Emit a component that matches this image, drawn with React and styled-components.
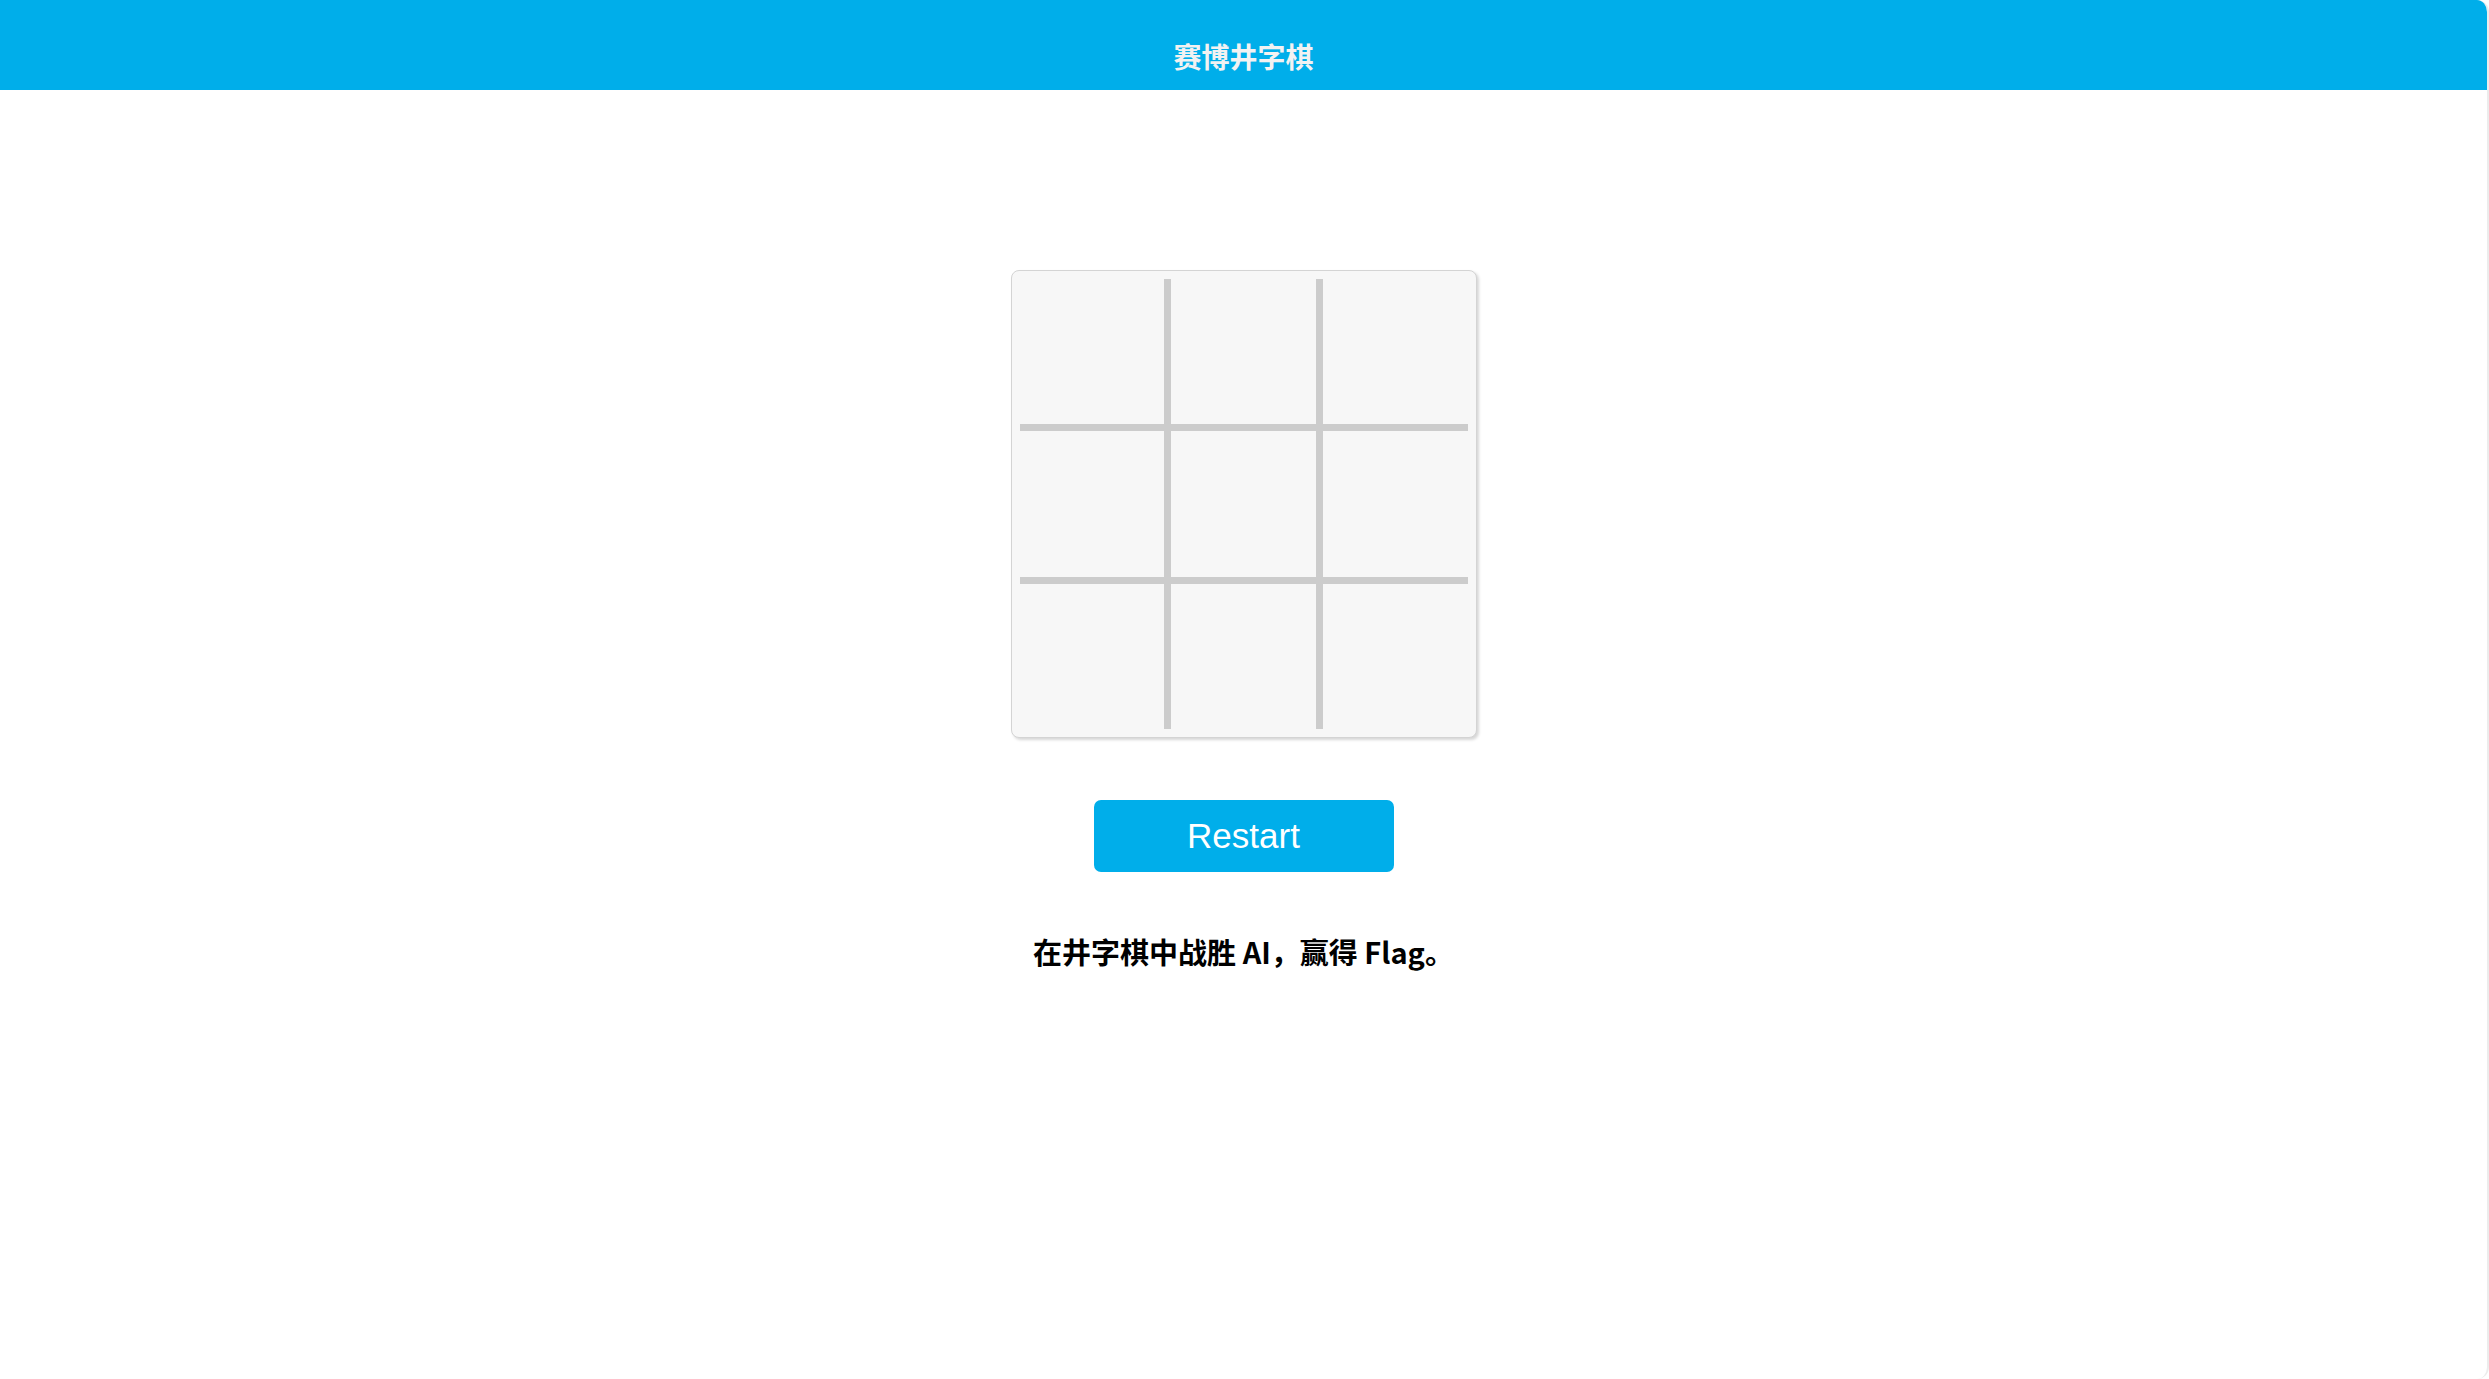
import React, {useState} from "react";
import styled, {createGlobalStyle} from 'styled-components';

const GlobalStyle = createGlobalStyle`
    html, body {
        margin: 0;
        padding: 0;
        background: #ffffff;
    }
    body {
        font-family: "Noto Sans CJK SC", "Noto Sans", sans-serif;
    }
`

const Frame = styled.div`
    min-height: 100vh;
    display: flex;
    flex-direction: column;
    border-right: 2px solid #ececec;
    border-radius: 0 12px 12px 12px;
    overflow: hidden;
    box-sizing: border-box;
`

const Header = styled.header`
    height: 90px;
    box-sizing: border-box;
    padding-top: 39px;
    background: #00aeea;
    text-align: center;
`

const Title = styled.h1`
    margin: 0;
    font-size: 28px;
    line-height: 34px;
    font-weight: 700;
    color: #f2f2f2;
`

const Main = styled.main`
    display: flex;
    flex-direction: column;
    align-items: center;
    padding-top: 180px;
`

const BoardFrame = styled.div`
    padding: 8px;
    background: #f7f7f7;
    border: 1px solid #d4d4d4;
    border-radius: 8px;
    box-shadow: 2px 2px 3px rgba(0, 0, 0, 0.16);
`

const Grid = styled.div`
    display: grid;
    grid-template-columns: 144px 145px 145px;
    grid-template-rows: 145px 146px 145px;
    gap: 7px;
    background: #cccccc;
`

const Cell = styled.div`
    background: #f7f7f7;
    display: flex;
    align-items: center;
    justify-content: center;
    font-family: "Liberation Sans", sans-serif;
    font-size: 90px;
    font-weight: 700;
    color: ${props => props.mark === 'X' ? '#00aeea' : '#ff6b6b'};
    cursor: pointer;
`

const RestartButton = styled.button`
    margin-top: 62px;
    width: 300px;
    height: 72px;
    border: none;
    border-radius: 7px;
    background: #00aeea;
    color: #ffffff;
    font-family: "Liberation Sans", Arial, sans-serif;
    font-size: 35px;
    cursor: pointer;
`

const Message = styled.p`
    margin: 59px 0 0;
    font-size: 29px;
    line-height: 40px;
    font-weight: 700;
    color: #000000;
`

export default function App() {
    const [cells, setCells] = useState(Array(9).fill(null));

    const play = (i) => {
        if (cells[i]) return;
        const next = cells.slice();
        next[i] = 'X';
        setCells(next);
    }

    return (
        <Frame>
            <GlobalStyle/>
            <Header>
                <Title>赛博井字棋</Title>
            </Header>
            <Main>
                <BoardFrame>
                    <Grid>
                        {cells.map((c, i) => (
                            <Cell key={i} mark={c} onClick={() => play(i)}>{c}</Cell>
                        ))}
                    </Grid>
                </BoardFrame>
                <RestartButton onClick={() => setCells(Array(9).fill(null))}>Restart</RestartButton>
                <Message>在井字棋中战胜 AI，赢得 Flag。</Message>
            </Main>
        </Frame>
    );
}
